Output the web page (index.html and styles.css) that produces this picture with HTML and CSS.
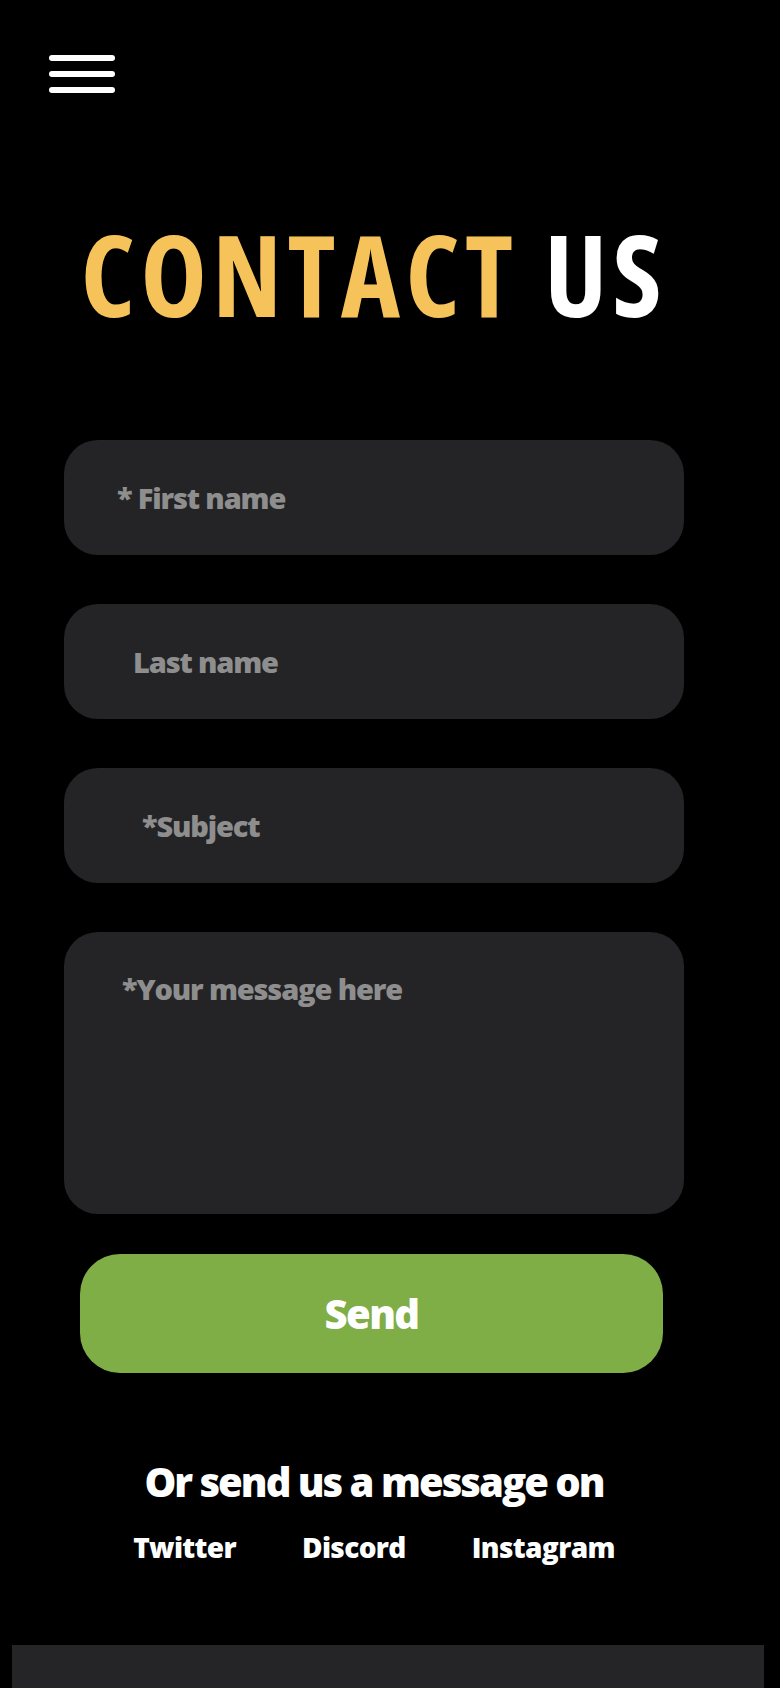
FILE: index.html
```html
<!DOCTYPE html>
<html lang="en">
<head>
<meta charset="utf-8">
<meta name="viewport" content="width=device-width, initial-scale=1">
<title>Contact us</title>
<link rel="stylesheet" href="styles.css">
</head>
<body>
<div class="page">
  <header class="topbar">
    <button class="menu" type="button" aria-label="Menu">
      <span class="menu__bar"></span>
      <span class="menu__bar"></span>
      <span class="menu__bar"></span>
    </button>
  </header>
  <main class="main">
    <h1 class="title"><span class="title__accent">CONTACT</span> US</h1>
    <form class="form">
      <div class="fields">
        <input class="field field--first" type="text" placeholder="* First name">
        <input class="field field--last" type="text" placeholder="Last name">
        <input class="field field--subject" type="text" placeholder="*Subject">
        <textarea class="field field--message" placeholder="*Your message here"></textarea>
      </div>
      <button class="send" type="submit">Send</button>
    </form>
    <h2 class="alt-title">Or send us a message on</h2>
    <nav class="socials">
      <a class="socials__link" href="#">Twitter</a>
      <a class="socials__link" href="#">Discord</a>
      <a class="socials__link" href="#">Instagram</a>
    </nav>
  </main>
  <footer class="footer"></footer>
</div>
</body>
</html>
```
FILE: styles.css
```css
* {
  box-sizing: border-box;
}

html, body {
  margin: 0;
  padding: 0;
  background: #000;
}

body {
  font-family: "Open Sans", "Liberation Sans", sans-serif;
  font-weight: 800;
  letter-spacing: -0.04em;
  color: #fff;
}

.page {
  display: flex;
  flex-direction: column;
  min-height: 1688px;
}

.topbar {
  padding: 55px 0 0 49px;
}

.menu {
  display: flex;
  flex-direction: column;
  gap: 10px;
  padding: 0;
  margin: 0;
  border: none;
  background: transparent;
  cursor: pointer;
}

.menu__bar {
  display: block;
  width: 66px;
  height: 6px;
  border-radius: 3px;
  background: #fff;
}

.main {
  margin-left: 64px;
  width: 620px;
  display: flex;
  flex-direction: column;
}

.title {
  margin: 125px 0 0;
  font-family: "Open Sans", "DejaVu Sans Condensed", sans-serif;
  font-stretch: 75%;
  font-weight: 700;
  font-size: 112px;
  line-height: 1;
  letter-spacing: 5.5px;
  text-align: center;
  color: #fff;
  white-space: nowrap;
}

.title__accent {
  color: #f6c35b;
}

.form {
  margin-top: 110px;
  display: flex;
  flex-direction: column;
}

.fields {
  display: flex;
  flex-direction: column;
  gap: 49px;
}

.field {
  display: block;
  width: 100%;
  height: 115px;
  margin: 0;
  border: none;
  outline: none;
  border-radius: 34px;
  background: #242426;
  color: #fff;
  font-family: inherit;
  font-weight: inherit;
  font-size: 29px;
  letter-spacing: -0.04em;
  padding: 0 20px 0 53px;
}

.field::placeholder {
  color: #8e8e8e;
  opacity: 1;
}

.field--last {
  padding-left: 69px;
}

.field--subject {
  padding-left: 78px;
}

.field--message {
  height: 282px;
  padding: 42px 20px 0 58px;
  line-height: 1;
  resize: none;
}

.send {
  margin: 40px 0 0 16px;
  width: 583px;
  height: 119px;
  border: none;
  border-radius: 40px;
  background: #80ae46;
  color: #fff;
  font-family: inherit;
  font-weight: inherit;
  font-size: 40px;
  letter-spacing: -0.04em;
  cursor: pointer;
}

.alt-title {
  margin: 89px 0 0;
  font-size: 40px;
  line-height: 1;
  letter-spacing: -0.05em;
  text-align: center;
  font-weight: inherit;
}

.socials {
  margin-top: 31px;
  display: flex;
  justify-content: center;
  gap: 66px;
}

.socials__link {
  font-size: 28px;
  line-height: 1;
  color: #fff;
  text-decoration: none;
}

.footer {
  margin: 84px 0 0 12px;
  width: 752px;
  height: 44px;
  background: #252527;
}
```
